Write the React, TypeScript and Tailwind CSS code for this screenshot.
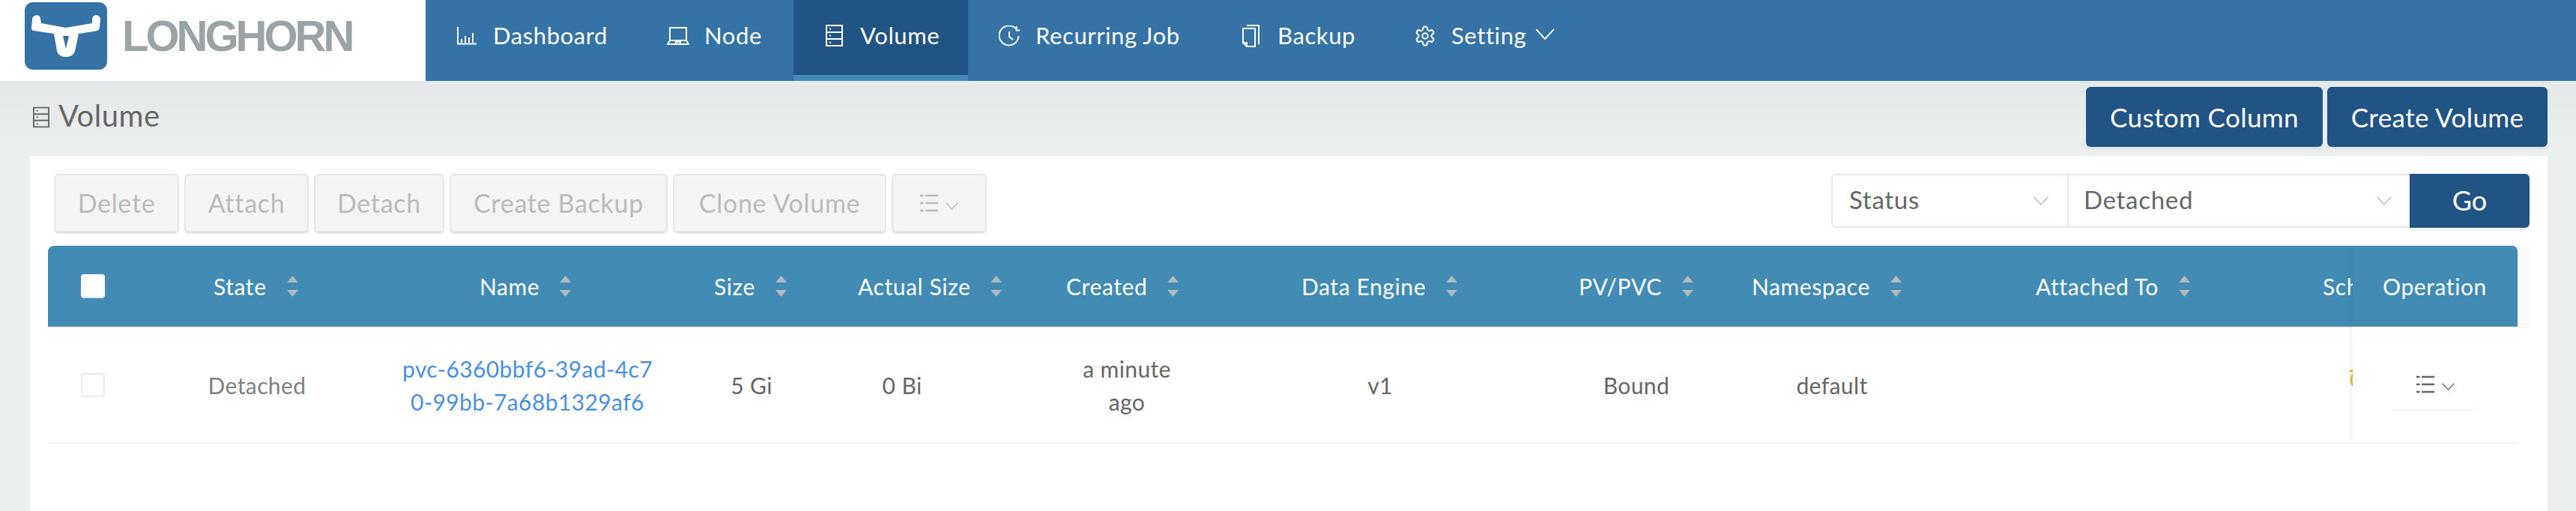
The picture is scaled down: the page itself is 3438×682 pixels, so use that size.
import React from "react";

const Chevron = ({ className }: { className: string }) => (
  <svg viewBox="0 0 24 14" className={className} fill="none" stroke="currentColor" strokeWidth="1.8">
    <path d="M1 1l11 12L23 1" />
  </svg>
);

const Logo = () => (
  <svg viewBox="0 0 110 90" className="w-[110px] h-[90px] shrink-0">
    <rect width="110" height="90" rx="11" fill="#3572a5" />
    <path
      fillRule="evenodd"
      fill="#fff"
      d="M10 23c0-7 11-8 11-1l1 6 33 6 35-6 0-6c1-7 11-6 11 1l-1 10c0 3-2 5-5 5.500l-23 3.500-5 23c-1 5-6 8-12 8s-11-3-12-8l-4-23-27-4c-2 0-3-2-3-4zM51 45l4 17 4-17z"
    />
  </svg>
);

const DashIcon = () => (
  <svg viewBox="0 0 26 24" className="w-[26px] h-[24px]" fill="none" stroke="#fff" strokeWidth="2">
    <path d="M1 0v22.500h25M6 21v-5M11 21v-9M16 21v-7M21 21V8" />
  </svg>
);
const NodeIcon = () => (
  <svg viewBox="0 0 30 24" className="w-[30px] h-[24px]" fill="none" stroke="#fff" strokeWidth="2">
    <path d="M4 18V1h22v17M4 18L1 23h28l-3-5zM12 23v-3h6v3" />
  </svg>
);
const VolIcon = ({ cls, color }: { cls: string; color: string }) => (
  <svg viewBox="0 0 23 29" className={cls} fill="none" stroke={color} strokeWidth="2">
    <path d="M1 1h21v27H1zM1 10h21M1 19h21" />
    <path d="M5 5.500h2M5 14.500h2M5 23.500h2" strokeWidth="2" />
  </svg>
);
const ClockIcon = () => (
  <svg viewBox="0 0 28 28" className="w-[28px] h-[28px]" fill="none" stroke="#fff" strokeWidth="2">
    <path d="M26.500 14A13 13 0 1 1 22.500 4M14 8v7l5 4" />
    <path d="M23.500 1v5.500H28" />
  </svg>
);
const CopyIcon = () => (
  <svg viewBox="0 0 24 30" className="w-[24px] h-[30px]" fill="none" stroke="#fff" strokeWidth="2">
    <path d="M7 1h16v25M2 5h16v24H7l-5-5zM2 24h5v5" />
  </svg>
);
const GearIcon = () => (
  <svg viewBox="0 0 24 24" className="w-[30px] h-[30px]" fill="none" stroke="#fff" strokeWidth="1.6" strokeLinejoin="round">
    <path d="M12.220 2h-.44a2 2 0 0 0-2 2v.18a2 2 0 0 1-1 1.730l-.43.25a2 2 0 0 1-2 0l-.15-.08a2 2 0 0 0-2.730.73l-.22.38a2 2 0 0 0 .73 2.730l.15.1a2 2 0 0 1 1 1.720v.510a2 2 0 0 1-1 1.740l-.15.09a2 2 0 0 0-.73 2.730l.22.38a2 2 0 0 0 2.730.73l.15-.08a2 2 0 0 1 2 0l.43.25a2 2 0 0 1 1 1.730V20a2 2 0 0 0 2 2h.44a2 2 0 0 0 2-2v-.18a2 2 0 0 1 1-1.730l.43-.25a2 2 0 0 1 2 0l.15.08a2 2 0 0 0 2.730-.73l.22-.39a2 2 0 0 0-.73-2.730l-.15-.08a2 2 0 0 1-1-1.740v-.5a2 2 0 0 1 1-1.740l.15-.09a2 2 0 0 0 .73-2.730l-.22-.38a2 2 0 0 0-2.730-.73l-.15.08a2 2 0 0 1-2 0l-.43-.25a2 2 0 0 1-1-1.730V4a2 2 0 0 0-2-2z" />
    <circle cx="12" cy="12" r="3" />
  </svg>
);
const ListIcon = ({ color }: { color: string }) => (
  <svg viewBox="0 0 24 24" className="w-[24px] h-[24px]" fill="none" stroke={color} strokeWidth="2.600">
    <path d="M7 2h17M7 12h17M7 22h17" />
    <path d="M0.500 2h3M0.500 12h3M0.500 22h3" strokeLinecap="round" />
  </svg>
);
const Sort = () => (
  <svg viewBox="0 0 17 28" className="w-[17px] h-[28px] shrink-0" fill="#b5b9bb">
    <path d="M8.500 0L16 9H1zM8.500 28L16 19H1z" />
  </svg>
);

const navItems = [
  { label: "Dashboard", icon: <DashIcon />, cls: "w-[281px] pl-[42px]", box: "w-[48px]" },
  { label: "Node", icon: <NodeIcon />, cls: "w-[210px] pl-[41px]", box: "w-[50px]" },
  { label: "Volume", icon: <VolIcon cls="w-[23px] h-[29px]" color="#fff" />, cls: "w-[233px] pl-[43px] bg-[#225385] border-b-[8px] border-[#428bb5]", box: "w-[46px]" },
  { label: "Recurring Job", icon: <ClockIcon />, cls: "w-[323px] pl-[41px]", box: "w-[49px]" },
  { label: "Backup", icon: <CopyIcon />, cls: "w-[231px] pl-[42px]", box: "w-[48px]" },
];

const headers = [
  { label: "State", cls: "w-[355px]" },
  { label: "Name", cls: "w-[313px]" },
  { label: "Size", cls: "w-[192px]" },
  { label: "Actual Size", cls: "w-[278px]" },
  { label: "Created", cls: "w-[314px]" },
  { label: "Data Engine", cls: "w-[370px]" },
  { label: "PV/PVC", cls: "w-[231px]" },
  { label: "Namespace", cls: "w-[379px]" },
  { label: "Attached To", cls: "w-[383px]" },
];

const toolbar = [
  { label: "Delete", cls: "w-[167px]" },
  { label: "Attach", cls: "w-[166px]" },
  { label: "Detach", cls: "w-[174px]" },
  { label: "Create Backup", cls: "w-[291px]" },
  { label: "Clone Volume", cls: "w-[285px]" },
];

export default function App() {
  return (
    <div className="w-[3438px] h-[682px] overflow-hidden flex flex-col bg-[#ebeff0] font-['Lato',sans-serif] text-[30px] text-[#666]">
      <nav className="h-[108px] flex shrink-0 bg-[#3572a5] text-white text-[31px] tracking-[0.6px]">
        <div className="w-[568px] bg-white flex pl-[33px] pt-[3px] gap-[20px]">
          <Logo />
          <span className="font-['Liberation_Sans',sans-serif] font-bold text-[58px] leading-[58px] mt-[16px] tracking-[-4px] text-[#9ca3a6]">LONGHORN</span>
        </div>
        {navItems.map((n) => (
          <div key={n.label} className={`h-[108px] flex items-start ${n.cls}`}>
            <div className="flex items-center h-[95px]">
              <span className={`flex items-center shrink-0 ${n.box}`}>{n.icon}</span>
              <span className="whitespace-nowrap">{n.label}</span>
            </div>
          </div>
        ))}
        <div className="h-[95px] pl-[41px] flex items-center">
          <span className="w-[50px] flex items-center shrink-0"><GearIcon /></span>
          <span>Setting</span>
          <Chevron className="w-[26px] h-[15px] ml-[12px] -mt-[4px]" />
        </div>
      </nav>

      <header className="h-[100px] shrink-0 flex justify-between pl-[44px] pr-[38px] pt-[8px] bg-gradient-to-b from-[#e4e8e9] to-[#ebeff0]">
        <div className="flex items-center h-[80px] gap-[12px] pb-[4px]">
          <VolIcon cls="w-[22px] h-[29px] mt-[4px]" color="#666" />
          <span className="text-[40px] tracking-[0.5px]">Volume</span>
        </div>
        <div className="flex gap-[6px] text-[35px] text-white">
          <button className="w-[316px] h-[80px] rounded-[6px] bg-[#225385] shadow-[0_4px_0_#e2e6e7] tracking-[0.4px]">Custom Column</button>
          <button className="w-[294px] h-[80px] rounded-[6px] bg-[#225385] shadow-[0_4px_0_#e2e6e7] tracking-[0.4px]">Create Volume</button>
        </div>
      </header>

      <main className="flex-1 ml-[40px] mr-[38px] bg-white pt-[24px]">
        <div className="flex justify-between pl-[32px] pr-[24px] h-[96px]">
          <div className="flex gap-[7px] text-[34px] text-[#bbb] tracking-[0.7px]">
            {toolbar.map((b) => (
              <button key={b.label} className={`h-[80px] pb-[2px] rounded-[6px] bg-[#f4f4f4] border-[2px] border-b-[4px] border-[#e6e6e6] ${b.cls}`}>{b.label}</button>
            ))}
            <button className="w-[127px] h-[80px] rounded-[6px] bg-[#f4f4f4] border-[2px] border-b-[4px] border-[#e6e6e6] flex items-center justify-center gap-[10px]">
              <ListIcon color="#bbb" />
              <Chevron className="w-[17px] h-[10px] mt-[8px]" />
            </button>
          </div>
          <div className="flex h-[72px] text-[33px]">
            <div className="w-[315px] h-[72px] flex items-center justify-between pl-[22px] pr-[25px] bg-white border-[2px] border-r-0 border-[#e8e8e8] rounded-l-[6px] tracking-[0.7px]">
              <span className="-mt-[2px]">Status</span>
              <Chevron className="w-[20px] h-[12px] text-[#bbb]" />
            </div>
            <div className="w-[457px] h-[72px] flex items-center justify-between pl-[20px] pr-[24px] bg-white border-[2px] border-r-0 border-[#e8e8e8] tracking-[0.7px]">
              <span className="-mt-[2px]">Detached</span>
              <Chevron className="w-[20px] h-[12px] text-[#bbb]" />
            </div>
            <button className="w-[160px] h-[72px] pb-[2px] bg-[#225385] text-white text-[36px] rounded-r-[6px] shadow-[0_4px_0_#f2f3f4]">Go</button>
          </div>
        </div>

        <div className="relative ml-[24px] mr-[24px]">
          <div className="bg-[#fafafa] border-b-[2px] border-[#f3f3f3]">
            <div className="w-[3296px] h-[108px] rounded-t-[8px] bg-[#428bb5] text-white text-[30px] tracking-[0.6px] flex items-center overflow-hidden">
              <div className="w-[221px] pl-[44px] shrink-0">
                <div className="w-[32px] h-[32px] bg-white rounded-[4px] border-b-[2px] border-[#e3e6e8]" />
              </div>
              {headers.map((h) => (
                <div key={h.label} className={`flex items-center gap-[26px] shrink-0 ${h.cls}`}>
                  <span className="whitespace-nowrap">{h.label}</span>
                  <Sort />
                </div>
              ))}
              <span className="w-[40px] overflow-hidden whitespace-nowrap shrink-0">Schedule</span>
            </div>
          </div>
          <div className="w-[3296px] h-[154px] border-b-[2px] border-[#f3f3f3] flex items-center text-[30px] tracking-[0.4px] overflow-hidden">
            <div className="w-[120px] pl-[44px] shrink-0">
              <div className="w-[32px] h-[32px] rounded-[4px] border-[2px] border-[#eaeaea] bg-white" />
            </div>
            <div className="w-[318px] text-center text-[#808080] shrink-0">Detached</div>
            <div className="w-[404px] text-center text-[#4a90e2] leading-[44px] shrink-0">pvc-6360bbf6-39ad-4c7<br />0-99bb-7a68b1329af6</div>
            <div className="w-[194px] text-center shrink-0">5 Gi</div>
            <div className="w-[208px] text-center shrink-0">0 Bi</div>
            <div className="w-[392px] text-center leading-[44px] shrink-0">a minute<br />ago</div>
            <div className="w-[284px] text-center shrink-0">v1</div>
            <div className="w-[400px] text-center shrink-0">Bound</div>
            <div className="w-[122px] text-center shrink-0">default</div>
            <div className="w-[628px] shrink-0" />
            <svg viewBox="0 0 30 30" className="w-[30px] h-[30px] -mt-[14px] shrink-0" fill="none" stroke="#e5b93c" strokeWidth="3">
              <circle cx="16" cy="15" r="12" />
              <path d="M0 3l8-3v6z" fill="#e5b93c" stroke="none" />
            </svg>
          </div>
          <div className="absolute top-0 left-[3076px] w-[220px] h-[262px] shadow-[-6px_0_8px_-4px_rgba(0,0,0,0.06)]">
            <div className="h-[108px] bg-[#428bb5] rounded-tr-[8px] flex items-center justify-center text-white text-[30px] tracking-[0.6px] pr-[1px]">Operation</div>
            <div className="h-[154px] bg-white flex items-start justify-center">
              <div className="w-[118px] h-[109px] flex items-center justify-center gap-[10px] rounded-[6px] shadow-[0_4px_0_#fafafa] pt-[45px]">
                <ListIcon color="#666" />
                <Chevron className="w-[17px] h-[10px] mt-[6px]" />
              </div>
            </div>
          </div>
        </div>
      </main>
    </div>
  );
}
